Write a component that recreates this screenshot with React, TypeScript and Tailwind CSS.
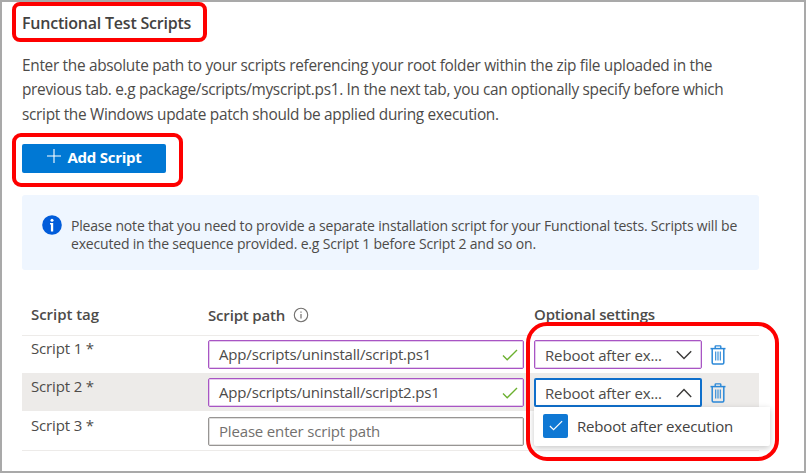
import type { ReactNode } from "react";

function Check({ className }: { className: string }) {
  return (
    <svg viewBox="0 0 16 12" fill="none" strokeWidth="1.35" className={className}>
      <path d="M1 6.6 L5.2 10.8 L15 1" stroke="currentColor" />
    </svg>
  );
}

function Chevron({ up = false }: { up?: boolean }) {
  return (
    <svg viewBox="0 0 16 10" fill="none" className="h-2.5 w-4 shrink-0 text-[#3b3a39]">
      <path d={up ? "M.8 9 L8 1.6 L15.2 9" : "M.8 1.2 L8 8.6 L15.2 1.2"} stroke="currentColor" strokeWidth="1.4" />
    </svg>
  );
}

function Trash() {
  return (
    <svg viewBox="0 0 16 20" fill="none" stroke="#2b88d8" className="h-5 w-4 shrink-0">
      <path d="M.5 3.6 H15.5" strokeWidth="1.5" />
      <path d="M5.2 3.3 V1.6 Q5.2 .9 5.9 .9 H10.1 Q10.8 .9 10.8 1.6 V3.3" strokeWidth="1.4" />
      <path d="M2.2 3.8 V17.8 Q2.2 19 3.4 19 H12.6 Q13.8 19 13.8 17.8 V3.8" strokeWidth="1.5" />
      <path d="M5.7 6.5 V15.5 M8 6.5 V15.5 M10.3 6.5 V15.5" strokeWidth="1.1" />
    </svg>
  );
}

function PathInput({ value }: { value?: string }) {
  return (
    <div
      className={`flex h-[29px] w-[316px] items-center justify-between rounded-[2px] border bg-white pr-[5px] pl-2.5 ${
        value
          ? "border-[#a855c4] text-[#4d4b49] shadow-[inset_0_0_0_1px_rgba(168,85,196,0.3)]"
          : "border-[#979593] text-[#72706e] shadow-[inset_0_0_0_1px_rgba(151,149,147,0.3)]"
      }`}
    >
      <span className="tracking-[-0.17px]">{value ?? "Please enter script path"}</span>
      {value && <Check className="h-3 w-4 text-[#6bb02f]" />}
    </div>
  );
}

function Select({ open = false, children }: { open?: boolean; children?: ReactNode }) {
  return (
    <div className="relative ml-2.5">
      <div
        className={`flex h-[29px] w-[168px] items-center justify-between rounded-[2px] bg-white text-[#4d4b49] ${
          open
            ? "border-2 border-[#0f6fcb] pr-2 pl-[9px]"
            : "border border-[#a855c4] pr-[9px] pl-2.5 shadow-[inset_0_0_0_1px_rgba(168,85,196,0.3)]"
        }`}
      >
        <span className="pt-[2px] tracking-[-0.14px]">Reboot after ex...</span>
        <Chevron up={open} />
      </div>
      {children}
    </div>
  );
}

function Row({ tag, className, children }: { tag: string; className: string; children: ReactNode }) {
  return (
    <div className={`flex items-start pl-[9px] ${className}`}>
      <div className="w-[177px] pt-[1px] leading-5 tracking-[-0.15px] text-[#4d4b49]">{tag}</div>
      <div className="flex pt-[3px]">{children}</div>
    </div>
  );
}

export default function App() {
  return (
    <div className="relative h-[473px] w-[806px] overflow-hidden border-2 border-[#a9a9a9] bg-white pt-[9px] pl-5 font-['Open_Sans','Noto_Sans',sans-serif] text-[15px] text-[#4d4b49]">
      <h1 className="text-base leading-6 font-semibold tracking-[-0.22px] text-[#434241]">Functional Test Scripts</h1>
      <p className="mt-[19px] text-[15.4px] leading-[24.4px] tracking-[-0.305px] whitespace-nowrap">
        Enter the absolute path to your scripts referencing your root folder within the zip file uploaded in the
        <br />
        previous tab. e.g package/scripts/myscript.ps1. In the next tab, you can optionally specify before which
        <br />
        script the Windows update patch should be applied during execution.
      </p>
      <button className="mt-[17px] flex h-[29px] w-36 items-center rounded-[2px] bg-[#0078d4] pb-[2px] pl-[25px] font-bold tracking-[-0.26px] text-white">
        <svg viewBox="0 0 14 14" className="mt-[-3px] mr-[6.5px] h-3.5 w-3.5" stroke="currentColor" strokeWidth="1.1">
          <path d="M7 0 V14 M0 7 H14" />
        </svg>
        Add Script
      </button>

      <div className="mt-[22px] flex h-[75px] w-[737px] items-start rounded-[3px] bg-[#eff6ff] pt-5 pl-5">
        <svg viewBox="0 0 20 20" className="h-5 w-5 shrink-0">
          <circle cx="10" cy="10" r="9.8" fill="#015cda" />
          <circle cx="10" cy="5.2" r="1.5" fill="white" />
          <path d="M8 8 H11.2 V16.5 H8.9 V9.4 H8 Z" fill="white" />
        </svg>
        <p className="mt-[2px] ml-[9px] text-sm leading-[17.5px] tracking-[-0.185px] whitespace-nowrap">
          Please note that you need to provide a separate installation script for your Functional tests. Scripts will be
          <br />
          executed in the sequence provided. e.g Script 1 before Script 2 and so on.
        </p>
      </div>

      <div className="w-[737px]">
        <div className="flex h-[66px] items-end border-b border-[#edebe9] pb-[11px] pl-[9px] font-semibold text-[#4d4b49]">
          <div className="w-[177px] leading-5 tracking-[-0.05px]">Script tag</div>
          <div className="-mb-px flex w-[326px] items-center leading-5 tracking-[-0.18px]">
            Script path
            <svg viewBox="0 0 16 16" fill="none" stroke="#72706e" className="mb-px ml-2 h-4 w-4">
              <circle cx="8" cy="8" r="6.7" strokeWidth="1.1" />
              <path d="M8 7 V11.6 M8 4.4 V5.7" strokeWidth="1.2" />
            </svg>
          </div>
          <div className="leading-5 tracking-[-0.17px]">Optional settings</div>
        </div>

        <Row tag="Script 1 *" className="h-[37px] pt-px">
          <PathInput value="App/scripts/uninstall/script.ps1" />
          <Select />
          <div className="mt-[5px] ml-2">
            <Trash />
          </div>
        </Row>
        <Row tag="Script 2 *" className="h-[38px] bg-[#edebe9] pt-[2px]">
          <PathInput value="App/scripts/uninstall/script2.ps1" />
          <Select open>
            <div className="absolute top-[29px] left-0 z-10 flex h-[39px] w-[236px] items-center rounded-b-[2px] bg-white pb-[2px] pl-[9px] shadow-[0_2px_6px_rgba(0,0,0,0.22)]">
              <div className="flex h-6 w-[25px] items-center justify-center rounded-[2px] bg-[#0f78d4]">
                <Check className="h-[11px] w-3.5 text-white" />
              </div>
              <span className="ml-[9px] pt-px tracking-[-0.17px] text-[#434241]">Reboot after execution</span>
            </div>
          </Select>
          <div className="mt-[5px] ml-2">
            <Trash />
          </div>
        </Row>
        <Row tag="Script 3 *" className="h-[40px] border-b border-[#edebe9] pt-[3px]">
          <PathInput />
        </Row>
      </div>

      <div className="absolute top-0 left-2.5 h-10 w-[195px] rounded-lg border-4 border-[#fe0000]" />
      <div className="absolute top-[131px] left-2.5 h-[54px] w-[171px] rounded-[9px] border-4 border-[#fe0000]" />
      <div className="absolute top-[320px] left-[524px] z-20 h-[139px] w-[253px] rounded-[21px] border-4 border-[#fe0000]" />
    </div>
  );
}
